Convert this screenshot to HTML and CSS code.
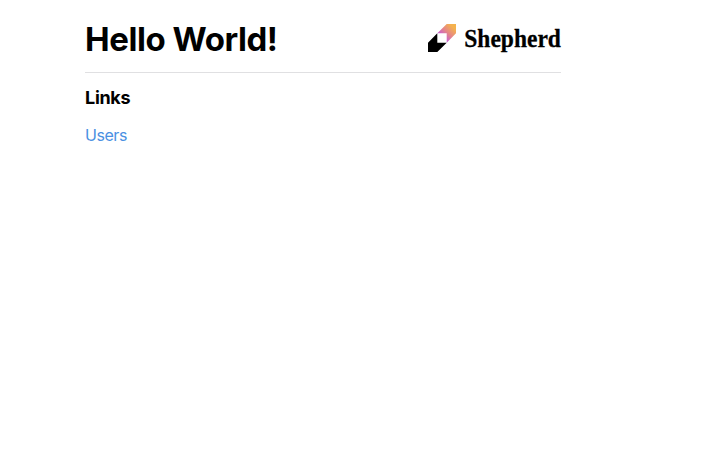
FILE: index.html
```
<!DOCTYPE html>
<html lang="en">
<head>
<meta charset="utf-8">
<title>Hello World!</title>
<link rel="stylesheet" href="styles.css">
</head>
<body>
<main class="page">
  <header class="header">
    <h1 class="title">Hello World!</h1>
    <svg class="logo" width="133" height="30" viewBox="0 0 133 30" role="img" aria-label="Shepherd">
      <defs>
        <linearGradient id="flame" gradientUnits="userSpaceOnUse" x1="14" y1="14" x2="25" y2="3">
          <stop offset="0" stop-color="#c458dc"/>
          <stop offset="0.5" stop-color="#e58688"/>
          <stop offset="1" stop-color="#f4b24e"/>
        </linearGradient>
      </defs>
      <path fill="url(#flame)" d="M9.3 9.3 18.7 0H28v9.3L18.7 18.7V9.3Z"/>
      <path fill="#000" d="M9.3 9.3V18.7H18.7L9.3 28H0V18.7Z"/>
      <text class="wordmark" x="36.3" y="23" textLength="96.6" lengthAdjust="spacingAndGlyphs">Shepherd</text>
    </svg>
  </header>
  <h2 class="subtitle">Links</h2>
  <nav><a class="link" href="#">Users</a></nav>
</main>
</body>
</html>
```
FILE: styles.css
```
body {
  margin: 0;
  background: #fff;
  color: #000;
  font-family: Inter, sans-serif;
}

.page {
  width: 476px;
  margin-left: 85px;
  padding-top: 16px;
}

.header {
  display: flex;
  justify-content: space-between;
  height: 56px;
  border-bottom: 1px solid #e0e0e2;
}

.title {
  margin: 0;
  font-size: 33px;
  font-weight: 700;
  line-height: 47px;
  letter-spacing: -0.45px;
}

.logo {
  margin-top: 8px;
  overflow: visible;
}

.wordmark {
  font: 700 26px "Liberation Serif", serif;
  stroke: #000;
  stroke-width: 0.3px;
}

.subtitle {
  margin: 13px 0 13px;
  font-size: 18px;
  font-weight: 700;
  line-height: 24px;
  letter-spacing: -0.3px;
}

.link {
  display: block;
  color: #4a90e2;
  font-size: 16px;
  line-height: 24px;
  letter-spacing: -0.45px;
  text-decoration: none;
}
```
